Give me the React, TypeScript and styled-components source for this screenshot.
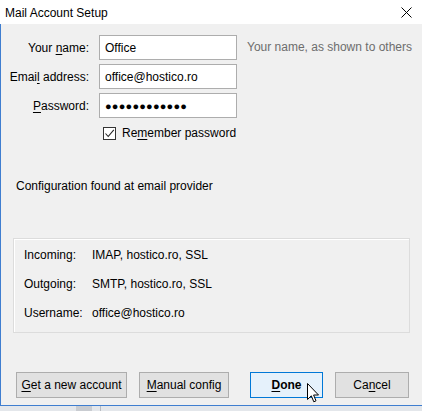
import { createGlobalStyle } from "styled-components";
import styled from "styled-components";

const Global = createGlobalStyle`
	html, body {
		margin: 0;
		padding: 0;
		background: #e9ebee;
	}
	body {
		font-family: "Liberation Sans", Arial, sans-serif;
		font-size: 12px;
		color: #000;
	}
`;

const Screen = styled.div`
	width: 422px;
	height: 411px;
	display: flex;
	flex-direction: column;
	position: relative;
	overflow: hidden;
`;

const Window = styled.div`
	height: 406px;
	display: flex;
	flex-direction: column;
	background: #f0f0f0;
	border-bottom: 1px solid #3f7ed0;
	box-sizing: border-box;
`;

const TitleBar = styled.div`
	height: 24px;
	flex: none;
	background: #fff;
	display: flex;
	align-items: center;
	justify-content: space-between;
	padding: 0 10px 0 5px;
`;

const Title = styled.span`
	font-size: 12px;
	padding-top: 1px;
`;

const Body = styled.div`
	flex: 1;
	border-left: 1px solid #3f7ed0;
	padding: 11px 12px 0 14px;
	display: flex;
	flex-direction: column;
`;

const FormGrid = styled.div`
	display: grid;
	grid-template-columns: 86px 138px auto;
	column-gap: 10px;
	row-gap: 4px;
	align-items: center;
	margin-left: -12px;
`;

const Label = styled.label`
	text-align: right;
	white-space: nowrap;
`;

const Input = styled.div`
	height: 25px;
	box-sizing: border-box;
	background: #fff;
	border: 1px solid #adadad;
	display: flex;
	align-items: center;
	padding-left: 5px;
	font-size: 12px;
`;

const Dots = styled.span`
	font-size: 11px;
	letter-spacing: 0.2px;
	padding-top: 1px;
`;

const Hint = styled.span`
	color: #6d6d6d;
	white-space: nowrap;
	margin-top: -1px;
`;

const CheckRow = styled.div`
	display: flex;
	align-items: center;
	gap: 6px;
	margin: 8px 0 0 88px;
`;

const Box = styled.span`
	width: 13px;
	height: 13px;
	box-sizing: border-box;
	border: 1px solid #333;
	background: #fff;
	display: flex;
	align-items: center;
	justify-content: center;
`;

const Status = styled.div`
	margin: 39px 0 0 1px;
`;

const Group = styled.div`
	margin: 45px 0 0 -2px;
	height: 95px;
	box-sizing: border-box;
	border: 1px solid #dcdcdc;
	box-shadow: inset 1px 1px 0 #fff;
	display: grid;
	grid-template-columns: 68px auto;
	grid-auto-rows: 29px;
	align-content: start;
	padding: 1px 0 0 10px;
	align-items: center;
`;

const Buttons = styled.div`
	margin: 39px 0 0 1px;
	display: flex;
	align-items: center;
`;

const Button = styled.button<{ $w: number; $primary?: boolean; $ml: number }>`
	width: ${(p) => p.$w}px;
	margin-left: ${(p) => p.$ml}px;
	height: 26px;
	box-sizing: border-box;
	font-family: "Liberation Sans", Arial, sans-serif;
	font-size: 12px;
	font-weight: ${(p) => (p.$primary ? "bold" : "normal")};
	color: #000;
	background: ${(p) => (p.$primary ? "#e5f1fb" : "#e1e1e1")};
	border: 1px solid ${(p) => (p.$primary ? "#0078d7" : "#adadad")};
	padding: 0;
`;

const Key = styled.u`
	text-decoration-thickness: 1px;
	text-underline-offset: 2px;
`;

const Taskbar = styled.div`
	flex: 1;
	background: #e4e7eb;
	display: flex;
`;

const TaskBlock = styled.div<{ $ml: number; $w: number; $c: string }>`
	margin-left: ${(p) => p.$ml}px;
	width: ${(p) => p.$w}px;
	background: ${(p) => p.$c};
`;

const Cursor = styled.svg`
	position: absolute;
	left: 307px;
	top: 383px;
`;

export default function App() {
	return (
		<Screen>
			<Global />
			<Window>
				<TitleBar>
					<Title>Mail Account Setup</Title>
					<svg width="11" height="11" viewBox="0 0 11 11">
						<path d="M0.5 0.5 L10.5 10.5 M10.5 0.5 L0.5 10.5" stroke="#000" strokeWidth="1" fill="none" />
					</svg>
				</TitleBar>
				<Body>
					<FormGrid>
						<Label>
							Your <Key>n</Key>ame:
						</Label>
						<Input>Office</Input>
						<Hint>Your name, as shown to others</Hint>
						<Label>
							Emai<Key>l</Key> address:
						</Label>
						<Input>office@hostico.ro</Input>
						<span />
						<Label>
							<Key>P</Key>assword:
						</Label>
						<Input>
							<Dots>●●●●●●●●●●●●</Dots>
						</Input>
						<span />
					</FormGrid>
					<CheckRow>
						<Box>
							<svg width="11" height="11" viewBox="0 0 11 11">
								<path d="M1.5 5.5 L4.2 8.5 L9.8 1.8" stroke="#222" strokeWidth="1.1" fill="none" />
							</svg>
						</Box>
						<span>
							Re<Key>m</Key>ember password
						</span>
					</CheckRow>
					<Status>Configuration found at email provider</Status>
					<Group>
						<span>Incoming:</span>
						<span>IMAP, hostico.ro, SSL</span>
						<span>Outgoing:</span>
						<span>SMTP, hostico.ro, SSL</span>
						<span>Username:</span>
						<span>office@hostico.ro</span>
					</Group>
					<Buttons>
						<Button $w={111} $ml={0}>
							<Key>G</Key>et a new account
						</Button>
						<Button $w={90} $ml={12}>
							<Key>M</Key>anual config
						</Button>
						<Button $w={73} $ml={21} $primary>
							<Key>D</Key>one
						</Button>
						<Button $w={74} $ml={12}>
							Ca<Key>n</Key>cel
						</Button>
					</Buttons>
				</Body>
			</Window>
			<Taskbar>
				<TaskBlock $ml={76} $w={16} $c="#c9ccd1" />
				<TaskBlock $ml={8} $w={1} $c="#b8bcc2" />
			</Taskbar>
			<Cursor width="13" height="21" viewBox="0 0 13 21">
				<path d="M0.5 0.5 L0.5 16.5 L4.3 12.8 L6.8 18.8 L9 17.8 L6.6 12 L11.5 12 Z" fill="#fff" stroke="#000" strokeWidth="1" />
			</Cursor>
		</Screen>
	);
}
